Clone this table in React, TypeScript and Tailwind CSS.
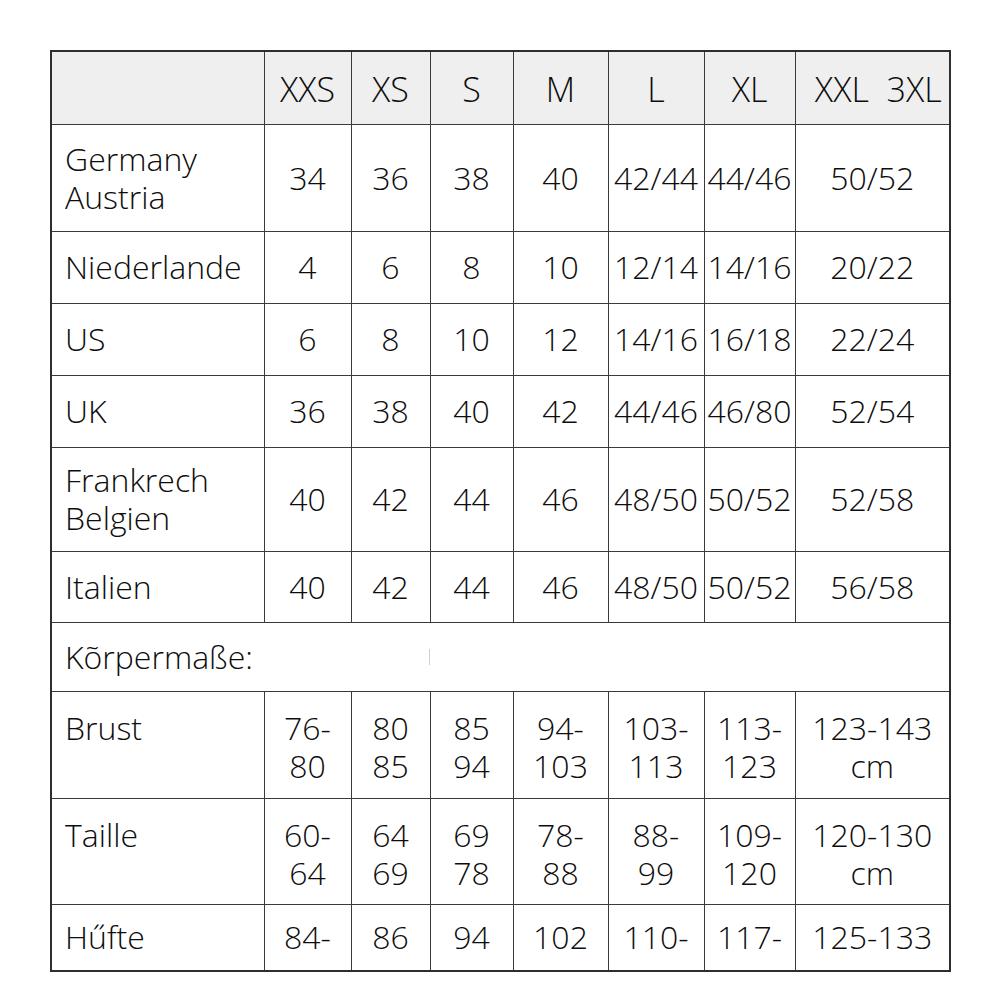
const sizes = ["XXS", "XS", "S", "M", "L", "XL"];

type Row = {
	label: string[];
	values: string[][];
	height: string;
	top?: boolean;
};

const countryRows: Row[] = [
	{ label: ["Germany", "Austria"], values: [["34"], ["36"], ["38"], ["40"], ["42/44"], ["44/46"], ["50/52"]], height: "h-[107px]" },
	{ label: ["Niederlande"], values: [["4"], ["6"], ["8"], ["10"], ["12/14"], ["14/16"], ["20/22"]], height: "h-[72px]" },
	{ label: ["US"], values: [["6"], ["8"], ["10"], ["12"], ["14/16"], ["16/18"], ["22/24"]], height: "h-[72px]" },
	{ label: ["UK"], values: [["36"], ["38"], ["40"], ["42"], ["44/46"], ["46/80"], ["52/54"]], height: "h-[72px]" },
	{ label: ["Frankrech", "Belgien"], values: [["40"], ["42"], ["44"], ["46"], ["48/50"], ["50/52"], ["52/58"]], height: "h-[104px]" },
	{ label: ["Italien"], values: [["40"], ["42"], ["44"], ["46"], ["48/50"], ["50/52"], ["56/58"]], height: "h-[71px]" },
];

const bodyRows: Row[] = [
	{
		label: ["Brust"],
		values: [["76-", "80"], ["80", "85"], ["85", "94"], ["94-", "103"], ["103-", "113"], ["113-", "123"], ["123-143", "cm"]],
		height: "h-[107px]",
		top: true,
	},
	{
		label: ["Taille"],
		values: [["60-", "64"], ["64", "69"], ["69", "78"], ["78-", "88"], ["88-", "99"], ["109-", "120"], ["120-130", "cm"]],
		height: "h-[106px]",
		top: true,
	},
	{ label: ["Hűfte"], values: [["84-"], ["86"], ["94"], ["102"], ["110-"], ["117-"], ["125-133"]], height: "h-[67px]" },
];

const cell = "border border-[#3a3a3a] p-0";

export default function App() {
	return (
		<main className="min-h-screen bg-white pl-[50px] pt-[50px] font-['Open_Sans','Noto_Sans',sans-serif] text-[#0d0d0d]">
			<table className="w-[899px] table-fixed border-collapse border-2 border-[#2e2e2e] text-[32px] font-[350] leading-[38px]">
				<colgroup>
					<col className="w-[213px]" />
					<col className="w-[87px]" />
					<col className="w-[79px]" />
					<col className="w-[83px]" />
					<col className="w-[95px]" />
					<col className="w-[96px]" />
					<col className="w-[91px]" />
					<col className="w-[155px]" />
				</colgroup>
				<thead>
					<tr className="h-[73px] bg-[#efefef]">
						<th className={cell} />
						{sizes.map((size) => (
							<th key={size} className={`${cell} pt-[2px] text-center text-[34px] font-[350]`}>
								{size}
							</th>
						))}
						<th className={`${cell} whitespace-nowrap pl-[12px] pt-[2px] text-center text-[34px] font-[350]`}>
							XXL&nbsp;&nbsp;3XL
						</th>
					</tr>
				</thead>
				<tbody>
					{countryRows.map((row) => (
						<TableRow key={row.label.join()} row={row} />
					))}
					<tr className="h-[69px]">
						<td colSpan={8} className={`${cell} relative pl-[13px]`}>
							Kõrpermaße:
							<span className="absolute left-[377px] top-[26px] h-[16px] w-px bg-[#cfcfcf]" />
						</td>
					</tr>
					{bodyRows.map((row) => (
						<TableRow key={row.label.join()} row={row} />
					))}
				</tbody>
			</table>
		</main>
	);
}

function TableRow({ row }: { row: Row }) {
	const align = row.top ? "align-top pt-[17px]" : "align-middle";
	return (
		<tr className={row.height}>
			<td className={`${cell} ${align} pl-[13px]`}>
				{row.label.map((line) => (
					<div key={line}>{line}</div>
				))}
			</td>
			{row.values.map((lines, index) => (
				<td key={index} className={`${cell} ${align} whitespace-nowrap text-center`}>
					{lines.map((line) => (
						<div key={line}>{line}</div>
					))}
				</td>
			))}
		</tr>
	);
}
